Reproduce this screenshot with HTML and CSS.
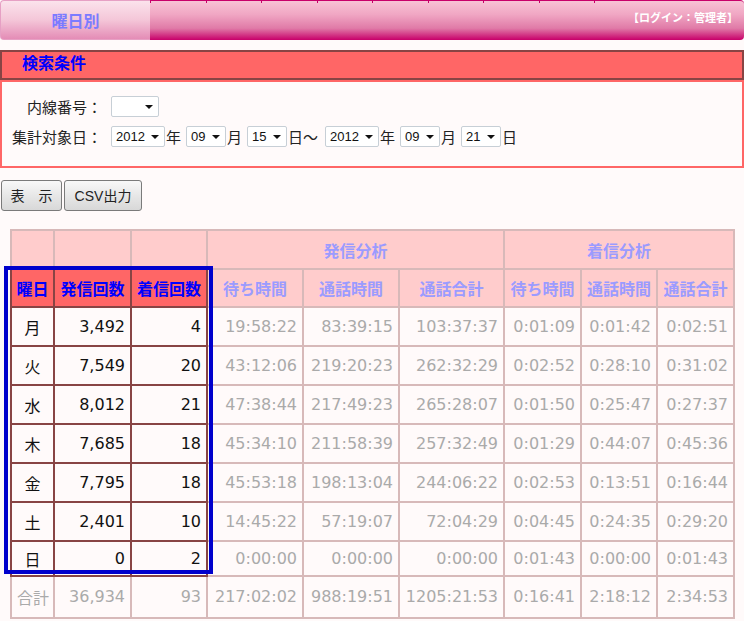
FILE: index.html
```html
<!DOCTYPE html>
<html lang="ja">
<head>
<meta charset="utf-8">
<title>曜日別</title>
<link rel="stylesheet" href="styles.css">
</head>
<body>
<header class="topbar">
  <div class="tab-active">曜日別</div>
  <div class="tab-rest">
    <span class="tick"></span><span class="tick"></span><span class="tick"></span><span class="tick"></span><span class="tick"></span><span class="tick"></span><span class="tick"></span><span class="tick"></span><span class="tick tick-last"></span>
    <span class="login">【ログイン：管理者】</span>
  </div>
</header>

<section class="search">
  <h2 class="search-title">検索条件</h2>
  <div class="search-body">
    <div class="field-row">
      <span class="label">内線番号：</span>
      <span class="select first w-ext"></span>
    </div>
    <div class="field-row">
      <span class="label">集計対象日：</span>
      <span class="select first w-year">2012</span><span class="unit">年</span>
      <span class="select w-md">09</span><span class="unit">月</span>
      <span class="select w-md">15</span><span class="unit">日～</span>
      <span class="select wide-gap w-year">2012</span><span class="unit">年</span>
      <span class="select w-md">09</span><span class="unit">月</span>
      <span class="select w-md">21</span><span class="unit">日</span>
    </div>
  </div>
</section>

<div class="buttons">
  <button class="btn btn-show">表　示</button>
  <button class="btn btn-csv">CSV出力</button>
</div>

<div class="table-wrap">
  <table class="stats">
    <colgroup>
      <col class="c-day"><col class="c-cnt"><col class="c-cnt2"><col class="c-t1"><col class="c-t2"><col class="c-t3"><col class="c-t4"><col class="c-t5"><col class="c-t6">
    </colgroup>
    <tr class="r-h1">
      <th></th><th></th><th></th>
      <th colspan="3">発信分析</th>
      <th colspan="3">着信分析</th>
    </tr>
    <tr class="r-h2">
      <th class="key-head">曜日</th><th class="key-head">発信回数</th><th class="key-head">着信回数</th>
      <th>待ち時間</th><th>通話時間</th><th>通話合計</th>
      <th>待ち時間</th><th>通話時間</th><th>通話合計</th>
    </tr>
    <tr class="r-data">
      <td class="key day">月</td><td class="key">3,492</td><td class="key">4</td>
      <td>19:58:22</td><td>83:39:15</td><td>103:37:37</td><td>0:01:09</td><td>0:01:42</td><td>0:02:51</td>
    </tr>
    <tr class="r-data">
      <td class="key day">火</td><td class="key">7,549</td><td class="key">20</td>
      <td>43:12:06</td><td>219:20:23</td><td>262:32:29</td><td>0:02:52</td><td>0:28:10</td><td>0:31:02</td>
    </tr>
    <tr class="r-data">
      <td class="key day">水</td><td class="key">8,012</td><td class="key">21</td>
      <td>47:38:44</td><td>217:49:23</td><td>265:28:07</td><td>0:01:50</td><td>0:25:47</td><td>0:27:37</td>
    </tr>
    <tr class="r-data">
      <td class="key day">木</td><td class="key">7,685</td><td class="key">18</td>
      <td>45:34:10</td><td>211:58:39</td><td>257:32:49</td><td>0:01:29</td><td>0:44:07</td><td>0:45:36</td>
    </tr>
    <tr class="r-data">
      <td class="key day">金</td><td class="key">7,795</td><td class="key">18</td>
      <td>45:53:18</td><td>198:13:04</td><td>244:06:22</td><td>0:02:53</td><td>0:13:51</td><td>0:16:44</td>
    </tr>
    <tr class="r-data">
      <td class="key day">土</td><td class="key">2,401</td><td class="key">10</td>
      <td>14:45:22</td><td>57:19:07</td><td>72:04:29</td><td>0:04:45</td><td>0:24:35</td><td>0:29:20</td>
    </tr>
    <tr class="r-last">
      <td class="key day">日</td><td class="key">0</td><td class="key">2</td>
      <td>0:00:00</td><td>0:00:00</td><td>0:00:00</td><td>0:01:43</td><td>0:00:00</td><td>0:01:43</td>
    </tr>
    <tr class="r-total">
      <td class="day">合計</td><td>36,934</td><td>93</td>
      <td>217:02:02</td><td>988:19:51</td><td>1205:21:53</td><td>0:16:41</td><td>2:18:12</td><td>2:34:53</td>
    </tr>
  </table>
  <div class="highlight"></div>
</div>
</body>
</html>
```

FILE: styles.css
```css
* { box-sizing: border-box; }

body {
  margin: 0;
  background: #fffafa;
  font-family: "Liberation Sans", "Noto Sans CJK JP", sans-serif;
  color: #222;
}

/* ---------- top bar ---------- */
.topbar {
  display: flex;
  height: 40px;
}
.tab-active {
  width: 150px;
  flex: none;
  display: flex;
  align-items: center;
  justify-content: center;
  font: bold 16px/1 "Noto Sans CJK JP", sans-serif;
  color: #7b7bff;
  background: linear-gradient(#fbe3ec, #f4c6d8 50%, #e48cb6);
  border: 1px solid #e6a0c4;
  border-right: none;
  border-radius: 4px 0 0 4px;
}
.tab-rest {
  flex: 1;
  display: flex;
  align-items: flex-start;
  background: linear-gradient(#f8c2d5, #f0a6c3 35%, #e07aa7 70%, #c8006a);
  border-top: 1px solid #c8006a;
  border-radius: 0 4px 4px 0;
}
.tick {
  flex: none;
  width: 55.5px;
  height: 2px;
  border-left: 1px solid #c8006a;
}
.tick-last { width: 1px; }
.login {
  margin-left: auto;
  align-self: center;
  margin-bottom: 6px;
  padding-right: 6px;
  white-space: nowrap;
  font: bold 11px/1 "Noto Sans CJK JP", sans-serif;
  color: #fff;
}

/* ---------- search ---------- */
.search {
  margin-top: 10px;
}
.search-title {
  margin: 0;
  height: 30px;
  padding-left: 20px;
  background: #ff6666;
  border: 2px solid #884444;
  font: bold 16px/21px "Noto Sans CJK JP", sans-serif;
  color: #0000ff;
}
.search-body {
  height: 88px;
  padding-top: 14px;
  border: 2px solid #ff6666;
  display: flex;
  flex-direction: column;
  gap: 9px;
}
.field-row {
  display: flex;
  align-items: center;
  height: 21px;
  font: 15px/1 "Noto Sans CJK JP", sans-serif;
  color: #222;
}
.label {
  width: 100px;
  flex: none;
  text-align: right;
}
.select {
  flex: none;
  display: flex;
  align-items: center;
  justify-content: space-between;
  height: 21px;
  margin-left: 5px;
  margin-right: 1px;
  padding: 0 5px 0 4px;
  background: #fff;
  border: 1px solid #c7cfd6;
  border-radius: 2px;
  font: 13px/1 "Liberation Sans", sans-serif;
  color: #111;
}
.select::after {
  content: "";
  margin-left: auto;
  border-left: 4px solid transparent;
  border-right: 4px solid transparent;
  border-top: 4px solid #111;
}
.select.first { margin-left: 9px; }
.select.wide-gap { margin-left: 7px; }
.w-ext { width: 48px; }
.w-year { width: 54px; }
.w-md { width: 40px; }

/* ---------- buttons ---------- */
.buttons {
  display: flex;
  gap: 2px;
  margin: 12px 0 0 1px;
}
.btn {
  height: 31px;
  padding: 0;
  border: 1px solid #7a7a7a;
  border-radius: 3px;
  background: linear-gradient(#f8f8f8, #e4e4e4 60%, #d8d8d8);
  font: 14px/1 "Liberation Sans", "Noto Sans CJK JP", sans-serif;
  color: #222;
}
.btn-show { width: 61px; }
.btn-csv { width: 78px; }

/* ---------- table ---------- */
.table-wrap {
  position: relative;
  margin: 18px 0 0 10px;
  width: 725px;
}
.stats {
  border-collapse: collapse;
  table-layout: fixed;
  width: 723px;
  font: 16px/1 "DejaVu Sans", "Noto Sans CJK JP", sans-serif;
}
.c-day { width: 43px; }
.c-cnt { width: 77px; }
.c-cnt2 { width: 76px; }
.c-t1 { width: 96px; }
.c-t2 { width: 96px; }
.c-t3 { width: 105px; }
.c-t4 { width: 77px; }
.c-t5 { width: 76px; }
.c-t6 { width: 77px; }

.stats th,
.stats td {
  border: 2px solid #d7b9b9;
  padding: 0 5px;
  white-space: nowrap;
  overflow: hidden;
}
.stats th {
  background: #ffcccc;
  color: #9b9bff;
  font-weight: bold;
  text-align: center;
  font-family: "Noto Sans CJK JP", sans-serif;
  padding: 0;
}
.stats td {
  background: #fffafa;
  color: #aaaaaa;
  text-align: right;
}
.stats td.day { text-align: center; font-family: "Noto Sans CJK JP", sans-serif; }
.stats .key-head {
  background: #ff6666;
  color: #0000ff;
  border-color: #884444;
}
.stats td.key {
  border-color: #884444;
  color: #111;
}
.r-h1 { height: 39px; }
.r-h2 { height: 38px; }
.r-data { height: 39px; }
.r-last { height: 35px; }
.r-total { height: 42px; }

.highlight {
  position: absolute;
  left: -6px;
  top: 37px;
  width: 209px;
  height: 308px;
  border: 4px solid #0000cc;
  pointer-events: none;
}
```
